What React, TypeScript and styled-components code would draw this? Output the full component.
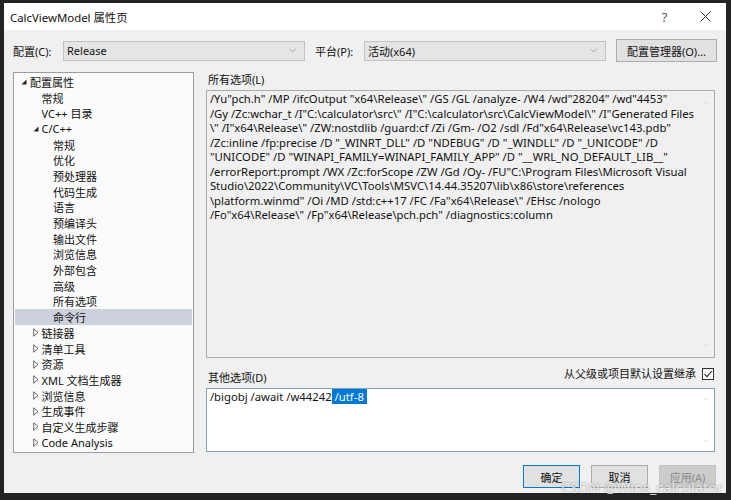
import React from 'react';
import styled, { createGlobalStyle } from 'styled-components';
import { ChevronDown, ChevronUp } from 'lucide-react';

const FONT = `"Noto Sans", "Noto Sans CJK SC", sans-serif`;

const GlobalStyle = createGlobalStyle`
  html, body {
    margin: 0;
    padding: 0;
    background: #222222;
  }
  body {
    font-family: ${FONT};
    color: #000;
  }
`;

type TreeNode = {
  label: string;
  level: number;
  state?: 'open' | 'closed';
  selected?: boolean;
};

const tree: TreeNode[] = [
  { label: '配置属性', level: 0, state: 'open' },
  { label: '常规', level: 1 },
  { label: 'VC++ 目录', level: 1 },
  { label: 'C/C++', level: 1, state: 'open' },
  { label: '常规', level: 2 },
  { label: '优化', level: 2 },
  { label: '预处理器', level: 2 },
  { label: '代码生成', level: 2 },
  { label: '语言', level: 2 },
  { label: '预编译头', level: 2 },
  { label: '输出文件', level: 2 },
  { label: '浏览信息', level: 2 },
  { label: '外部包含', level: 2 },
  { label: '高级', level: 2 },
  { label: '所有选项', level: 2 },
  { label: '命令行', level: 2, selected: true },
  { label: '链接器', level: 1, state: 'closed' },
  { label: '清单工具', level: 1, state: 'closed' },
  { label: '资源', level: 1, state: 'closed' },
  { label: 'XML 文档生成器', level: 1, state: 'closed' },
  { label: '浏览信息', level: 1, state: 'closed' },
  { label: '生成事件', level: 1, state: 'closed' },
  { label: '自定义生成步骤', level: 1, state: 'closed' },
  { label: 'Code Analysis', level: 1, state: 'closed' },
];

// wrapped the same way the read-only box wraps it
const allOptions = [
  '/Yu"pch.h" /MP /ifcOutput "x64\\Release\\" /GS /GL /analyze- /W4 /wd"28204" /wd"4453"',
  '/Gy /Zc:wchar_t /I"C:\\calculator\\src\\" /I"C:\\calculator\\src\\CalcViewModel\\" /I"Generated Files',
  '\\" /I"x64\\Release\\" /ZW:nostdlib /guard:cf /Zi /Gm- /O2 /sdl /Fd"x64\\Release\\vc143.pdb"',
  '/Zc:inline /fp:precise /D "_WINRT_DLL" /D "NDEBUG" /D "_WINDLL" /D "_UNICODE" /D',
  '"UNICODE" /D "WINAPI_FAMILY=WINAPI_FAMILY_APP" /D "__WRL_NO_DEFAULT_LIB__"',
  '/errorReport:prompt /WX /Zc:forScope /ZW /Gd /Oy- /FU"C:\\Program Files\\Microsoft Visual',
  'Studio\\2022\\Community\\VC\\Tools\\MSVC\\14.44.35207\\lib\\x86\\store\\references',
  '\\platform.winmd" /Oi /MD /std:c++17 /FC /Fa"x64\\Release\\" /EHsc /nologo',
  '/Fo"x64\\Release\\" /Fp"x64\\Release\\pch.pch" /diagnostics:column',
];

const App: React.FC = () => {
  return (
    <Page>
      <GlobalStyle />
      <Dialog>
        <TitleBar>
          <TitleText>CalcViewModel 属性页</TitleText>
          <TitleButton>?</TitleButton>
          <TitleButton>
            <svg width="11" height="11" viewBox="0 0 11 11">
              <path d="M0.5 0.5 L10.5 10.5 M10.5 0.5 L0.5 10.5" stroke="#333" strokeWidth="1" />
            </svg>
          </TitleButton>
        </TitleBar>

        <ConfigRow>
          <RowLabel $width={50}>配置(C):</RowLabel>
          <Combo>
            <span>Release</span>
            <ChevronDown size={11} strokeWidth={1.3} color="#777" />
          </Combo>
          <RowLabel $width={49} $gap={10}>平台(P):</RowLabel>
          <Combo>
            <span>活动(x64)</span>
            <ChevronDown size={11} strokeWidth={1.3} color="#777" />
          </Combo>
          <Button $width={101} $gap={10}>配置管理器(O)...</Button>
        </ConfigRow>

        <Main>
          <TreePanel>
            {tree.map((node, i) => (
              <TreeRow key={i} $level={node.level} $selected={!!node.selected}>
                <Expander>
                  {node.state === 'open' && (
                    <svg width="6" height="6" viewBox="0 0 6 6">
                      <path d="M5.5 0.5 L5.5 5.5 L0.5 5.5 Z" fill="#222" />
                    </svg>
                  )}
                  {node.state === 'closed' && (
                    <svg width="6" height="9" viewBox="0 0 6 9">
                      <path d="M0.75 0.75 L5 4.5 L0.75 8.25 Z" fill="none" stroke="#666" strokeWidth="1" />
                    </svg>
                  )}
                </Expander>
                <span>{node.label}</span>
              </TreeRow>
            ))}
          </TreePanel>

          <RightPanel>
            <FieldLabel>所有选项(L)</FieldLabel>
            <TextBox $height={268}>
              <TextBody>
                {allOptions.map((line, i) => (
                  <TextLine key={i}>{line}</TextLine>
                ))}
              </TextBody>
              <ScrollColumn $pad={7}>
                <ChevronUp size={10} strokeWidth={1.3} color="#c4c4c4" />
                <ChevronDown size={10} strokeWidth={1.3} color="#c4c4c4" />
              </ScrollColumn>
            </TextBox>

            <OtherRow>
              <OtherLabel>其他选项(D)</OtherLabel>
              <InheritGroup>
                <span>从父级或项目默认设置继承</span>
                <CheckBox>
                  <svg width="10" height="10" viewBox="0 0 10 10">
                    <path d="M1.5 5.2 L4 7.6 L8.8 2" fill="none" stroke="#222" strokeWidth="1.1" />
                  </svg>
                </CheckBox>
              </InheritGroup>
            </OtherRow>

            <TextBox $height={64} $editable>
              <TextBody>
                <TextLine>
                  /bigobj /await /w44242<Selection> /utf-8</Selection>
                </TextLine>
              </TextBody>
              <ScrollColumn $pad={5}>
                <ChevronUp size={10} strokeWidth={1.3} color="#c4c4c4" />
                <ChevronDown size={10} strokeWidth={1.3} color="#c4c4c4" />
              </ScrollColumn>
            </TextBox>
          </RightPanel>
        </Main>

        <Footer>
          <Button $width={57} $variant="default">确定</Button>
          <Button $width={57}>取消</Button>
          <Button $width={57} $variant="disabled">应用(A)</Button>
        </Footer>
      </Dialog>
      <Watermark>CSDN @Wins_calculator</Watermark>
    </Page>
  );
};

const Page = styled.div`
  position: relative;
  width: 731px;
  height: 500px;
  padding: 3px 5px 7px 4px;
  box-sizing: border-box;
  background: #232323;
  overflow: hidden;
`;

const Dialog = styled.div`
  display: flex;
  flex-direction: column;
  width: 722px;
  height: 490px;
  background: #f0f0f0;
  font-family: ${FONT};
  font-size: 11px;
`;

const TitleBar = styled.div`
  display: flex;
  align-items: center;
  height: 27px;
  padding-left: 6px;
  background: #ffffff;
`;

const TitleText = styled.div`
  flex: 1;
  font-size: 11.4px;
  color: #111;
`;

const TitleButton = styled.div`
  display: flex;
  align-items: center;
  justify-content: center;
  width: 41px;
  height: 27px;
  font-size: 13px;
  color: #555;
`;

const ConfigRow = styled.div`
  display: flex;
  align-items: center;
  padding: 9px 9px 10px 9px;
`;

const RowLabel = styled.div<{ $width: number; $gap?: number }>`
  width: ${p => p.$width}px;
  margin-left: ${p => p.$gap || 0}px;
  white-space: nowrap;
  color: #111;
`;

const Combo = styled.div`
  display: flex;
  align-items: center;
  justify-content: space-between;
  width: 242px;
  height: 20px;
  padding: 0 6px 0 3px;
  box-sizing: border-box;
  background: #e5e5e5;
  border: 1px solid #c2c2c2;
  color: #111;
`;

const Button = styled.div<{ $width: number; $gap?: number; $variant?: 'default' | 'disabled' }>`
  display: flex;
  align-items: center;
  justify-content: center;
  width: ${p => p.$width}px;
  height: 23px;
  margin-left: ${p => p.$gap || 0}px;
  box-sizing: border-box;
  background: ${p => (p.$variant === 'disabled' ? '#cccccc' : '#e1e1e1')};
  border: 1px solid ${p => (p.$variant === 'default' ? '#0078d7' : p.$variant === 'disabled' ? '#c4c4c4' : '#adadad')};
  color: ${p => (p.$variant === 'disabled' ? '#8a8a8a' : '#111')};
  white-space: nowrap;
`;

const Main = styled.div`
  display: flex;
  gap: 12px;
  height: 381px;
  padding: 0 11px 0 9px;
`;

const TreePanel = styled.div`
  width: 182px;
  padding: 1px;
  box-sizing: border-box;
  background: #fbfbfb;
  border: 1px solid #9a9ca2;
`;

const TreeRow = styled.div<{ $level: number; $selected: boolean }>`
  display: flex;
  align-items: center;
  height: 15.7px;
  padding-left: ${p => 4 + p.$level * 11.5}px;
  background: ${p => (p.$selected ? '#cdd1dc' : 'transparent')};
  color: #111;
  white-space: nowrap;
`;

const Expander = styled.div`
  display: flex;
  align-items: center;
  width: 9px;
  padding-left: 2px;
  height: 100%;
`;

const RightPanel = styled.div`
  flex: 1;
  display: flex;
  flex-direction: column;
`;

const FieldLabel = styled.div`
  height: 16px;
  line-height: 16px;
  margin-bottom: 2px;
  padding-left: 2px;
  color: #111;
`;

const TextBox = styled.div<{ $height: number; $editable?: boolean }>`
  display: flex;
  height: ${p => p.$height}px;
  box-sizing: border-box;
  background: ${p => (p.$editable ? '#ffffff' : '#f0f0f0')};
  border: 1px solid ${p => (p.$editable ? '#86a3b6' : '#acacac')};
`;

const TextBody = styled.div`
  flex: 1;
  padding: 1px 3px;
`;

const TextLine = styled.div`
  height: 14.5px;
  line-height: 14.5px;
  font-size: 11.3px;
  white-space: pre;
  color: #111;
`;

const Selection = styled.span`
  background: #0078d7;
  color: #ffffff;
  padding-right: 3px;
`;

const ScrollColumn = styled.div<{ $pad: number }>`
  display: flex;
  flex-direction: column;
  justify-content: space-between;
  align-items: center;
  width: 17px;
  padding: ${p => p.$pad}px 0;
`;

const OtherRow = styled.div`
  display: flex;
  justify-content: space-between;
  align-items: flex-start;
  height: 30px;
`;

const OtherLabel = styled.div`
  margin-top: 12px;
  line-height: 16px;
  padding-left: 2px;
  color: #111;
`;

const InheritGroup = styled.div`
  display: flex;
  align-items: center;
  gap: 6px;
  margin-top: 8px;
  line-height: 16px;
  padding-right: 1px;
  color: #111;
`;

const CheckBox = styled.div`
  display: flex;
  align-items: center;
  justify-content: center;
  width: 12px;
  height: 12px;
  box-sizing: border-box;
  background: #ffffff;
  border: 1px solid #333;
`;

const Footer = styled.div`
  display: flex;
  justify-content: flex-end;
  gap: 11px;
  padding: 12px 10px 5px 0;
`;

const Watermark = styled.div`
  position: absolute;
  right: 8px;
  bottom: 4px;
  font-family: ${FONT};
  font-size: 14.5px;
  line-height: 17px;
  color: rgba(255, 255, 255, 0.82);
  text-shadow: 0 0 2px rgba(0, 0, 0, 0.45);
  pointer-events: none;
`;

export default App;
